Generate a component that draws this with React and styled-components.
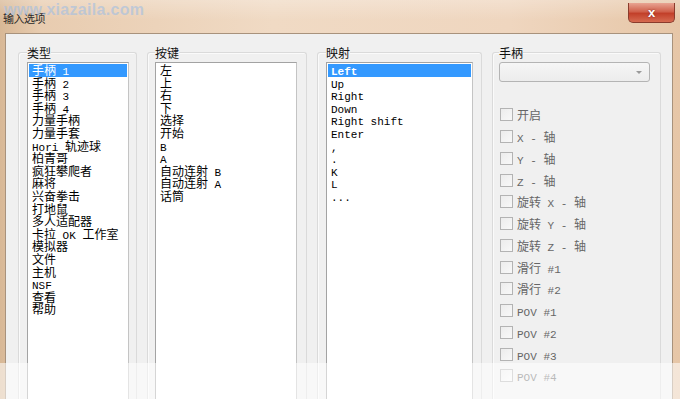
import styled, { createGlobalStyle } from "styled-components";

const GlobalStyle = createGlobalStyle`
  *, *::before, *::after {
    box-sizing: border-box;
  }
  body {
    margin: 0;
    overflow: hidden;
    background: #fff;
  }
`

const Window = styled.div`
  position: relative;
  width: 680px;
  height: 399px;
  overflow: hidden;
  display: flex;
  flex-direction: column;
  background: linear-gradient(90deg, #d8b896 0%, #e8ccb0 6%, #f0dac4 40%, #efd6bf 75%, #e6c6a7 100%);
  font-family: "Noto Sans CJK SC", "Liberation Sans", sans-serif;
`

const TitleBar = styled.div`
  height: 33px;
  flex: none;
  display: flex;
  align-items: flex-start;
  background: linear-gradient(180deg, rgba(255, 255, 255, 0.25) 0%, rgba(255, 255, 255, 0) 60%);
`

const Title = styled.div`
  margin: 11px 0 0 3px;
  font-size: 11px;
  line-height: 14px;
  color: #2a2a2a;
  letter-spacing: -0.5px;
`

const Watermark = styled.div`
  position: absolute;
  left: 4px;
  top: 1px;
  font-family: "Liberation Sans", sans-serif;
  font-weight: bold;
  font-size: 16px;
  color: rgba(160, 190, 228, 0.6);
  letter-spacing: 0.3px;
`

const CloseButton = styled.div`
  margin: 3px 5px 0 auto;
  width: 47px;
  height: 20px;
  border: 1px solid #8a3b2c;
  border-top: none;
  border-radius: 0 0 5px 5px;
  background: linear-gradient(180deg, #e8a492 0%, #d0614c 45%, #c2402a 55%, #d66a50 100%);
  display: flex;
  align-items: center;
  justify-content: center;
  color: #fff;
  font-family: "Liberation Sans", sans-serif;
  font-weight: bold;
  font-size: 13px;
  text-shadow: 0 0 2px #7a2010;
`

const Client = styled.div`
  flex: 1;
  margin: 0 7px 0 5px;
  border: 1px solid #a8927c;
  border-bottom: none;
  background: #f0f0f0;
  display: flex;
  gap: 10px;
  padding: 0 0 0 12px;
`

const Group = styled.div`
  flex: none;
  width: ${(p) => p.$w}px;
  margin-top: 18px;
  border: 1px solid #dadada;
  border-bottom: none;
  border-radius: 3px 3px 0 0;
  box-shadow: inset 1px 1px 0 #fafafa;
  padding: 0 ${(p) => p.$pr}px 0 ${(p) => p.$pl}px;
  display: flex;
  flex-direction: column;
`

const Label = styled.div`
  align-self: flex-start;
  margin-top: -9px;
  height: 17px;
  font-size: 12px;
  line-height: 17px;
  color: #111;
  background: #f0f0f0;
`

const ListBox = styled.div`
  flex: 1;
  margin-top: 1px;
  background: #fff;
  border: 1px solid #a3a3a3;
  border-right-color: #c4c4c4;
  border-bottom: none;
  padding: 1px 1px 0;
`

const Item = styled.div`
  height: 12.6px;
  padding-left: 3px;
  font-size: 12px;
  line-height: 12.6px;
  white-space: nowrap;
  color: ${(p) => (p.$selected ? "#fff" : "#000")};
  background: ${(p) => (p.$selected ? "#3399ff" : "transparent")};
`

const Latin = styled.span`
  font-family: "Liberation Mono", monospace;
  font-size: 11px;
  font-weight: ${(p) => (p.$bold ? "bold" : "normal")};
`

const Combo = styled.div`
  position: relative;
  height: 20px;
  margin-top: 1px;
  border: 1px solid #b4b4b4;
  border-radius: 3px;
  background: linear-gradient(180deg, #f6f6f6 0%, #ececec 100%);
`

const Arrow = styled.div`
  position: absolute;
  right: 7px;
  top: 8px;
  width: 0;
  height: 0;
  border-left: 3px solid transparent;
  border-right: 3px solid transparent;
  border-top: 3px solid #9a9a9a;
`

const CheckList = styled.div`
  margin-top: 22px;
  display: flex;
  flex-direction: column;
`

const CheckRow = styled.div`
  height: 21.75px;
  display: flex;
  align-items: center;
  gap: 4px;
  padding-left: 1px;
  color: #666;
  font-size: 12px;
`

const Box = styled.div`
  flex: none;
  width: 13px;
  height: 13px;
  border: 1px solid #b3b3b3;
  background: linear-gradient(135deg, #ececec 0%, #f8f8f8 100%);
`

const FadeBand = styled.div`
  position: absolute;
  left: 0;
  right: 0;
  top: 363px;
  bottom: 0;
  background: rgba(255, 255, 255, 0.55);
`

const types = [
  "手柄 1", "手柄 2", "手柄 3", "手柄 4", "力量手柄", "力量手套", "Hori 轨迹球",
  "柏青哥", "疯狂攀爬者", "麻将", "兴奋拳击", "打地鼠", "多人适配器",
  "卡拉 OK 工作室", "模拟器", "文件", "主机", "NSF", "查看", "帮助",
];

const keys = ["左", "上", "右", "下", "选择", "开始", "B", "A", "自动连射 B", "自动连射 A", "话筒"];

const mappings = ["Left", "Up", "Right", "Down", "Right shift", "Enter", ",", ".", "K", "L", "..."];

const axes = [
  "开启", "X - 轴", "Y - 轴", "Z - 轴", "旋转 X - 轴", "旋转 Y - 轴", "旋转 Z - 轴",
  "滑行 #1", "滑行 #2", "POV #1", "POV #2", "POV #3", "POV #4",
];

// latin runs get the narrow mono face, cjk stays at 12px
function Mixed({ text, bold }) {
  return text.split(/([\u4e00-\u9fff]+)/).filter(Boolean).map((part, i) =>
    /[\u4e00-\u9fff]/.test(part)
      ? <span key={i}>{part}</span>
      : <Latin key={i} $bold={bold}>{part}</Latin>
  );
}

function App() {
  return (
    <Window>
      <GlobalStyle />
      <TitleBar>
        <Title>输入选项</Title>
        <CloseButton>x</CloseButton>
      </TitleBar>
      <Watermark>www.xiazaila.com</Watermark>
      <Client>
        <Group $w={119} $pl={8} $pr={7}>
          <Label>类型</Label>
          <ListBox>
            {types.map((t, i) => (
              <Item key={t} $selected={i === 0}><Mixed text={t} /></Item>
            ))}
          </ListBox>
        </Group>
        <Group $w={160} $pl={7} $pr={9}>
          <Label>按键</Label>
          <ListBox>
            {keys.map((k) => (
              <Item key={k}><Mixed text={k} /></Item>
            ))}
          </ListBox>
        </Group>
        <Group $w={165} $pl={8} $pr={8}>
          <Label>映射</Label>
          <ListBox>
            {mappings.map((m, i) => (
              <Item key={m} $selected={i === 0}><Mixed text={m} bold={i === 0} /></Item>
            ))}
          </ListBox>
        </Group>
        <Group $w={169} $pl={6} $pr={10}>
          <Label>手柄</Label>
          <Combo><Arrow /></Combo>
          <CheckList>
            {axes.map((a) => (
              <CheckRow key={a}>
                <Box />
                <span><Mixed text={a} /></span>
              </CheckRow>
            ))}
          </CheckList>
        </Group>
      </Client>
      <FadeBand />
    </Window>
  );
}

export default App;
